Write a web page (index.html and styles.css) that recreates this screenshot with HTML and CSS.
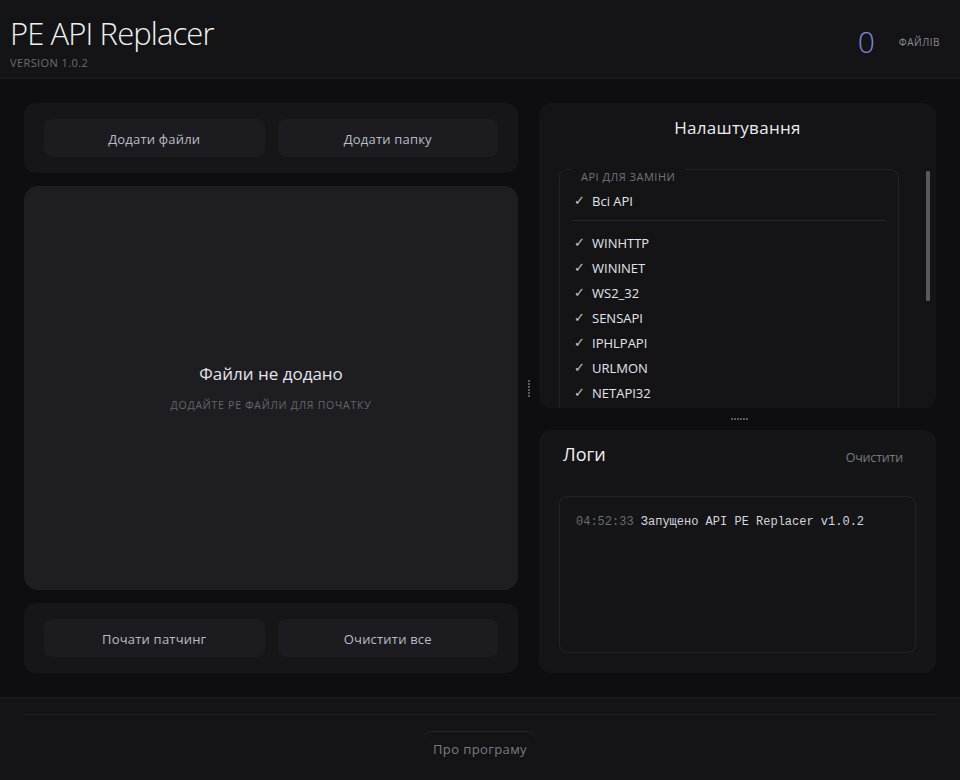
FILE: index.html
```html
<!DOCTYPE html>
<html lang="uk">
<head>
<meta charset="utf-8">
<title>PE API Replacer</title>
<link rel="stylesheet" href="styles.css">
</head>
<body>
<div class="app">
  <header class="header">
    <div class="brand">
      <h1 class="title">PE API Replacer</h1>
      <div class="version">VERSION 1.0.2</div>
    </div>
    <div class="counter">
      <span class="count">0</span>
      <span class="count-label">ФАЙЛІВ</span>
    </div>
  </header>

  <main class="main">
    <section class="left">
      <div class="card btn-row">
        <button class="btn">Додати файли</button>
        <button class="btn">Додати папку</button>
      </div>
      <div class="dropzone">
        <div class="dz-title">Файли не додано</div>
        <div class="dz-sub">Додайте PE файли для початку</div>
      </div>
      <div class="card btn-row">
        <button class="btn">Почати патчинг</button>
        <button class="btn">Очистити все</button>
      </div>
    </section>

    <div class="vsplit"><span class="vdots"></span></div>

    <section class="right">
      <div class="settings">
        <h2 class="settings-title">Налаштування</h2>
        <div class="scroll">
          <fieldset class="apis">
            <legend class="legend">API для заміни</legend>
            <div class="item"><span class="chk">✓</span>Всі API</div>
            <div class="divider"></div>
            <div class="item"><span class="chk">✓</span>WINHTTP</div>
            <div class="item"><span class="chk">✓</span>WININET</div>
            <div class="item"><span class="chk">✓</span>WS2_32</div>
            <div class="item"><span class="chk">✓</span>SENSAPI</div>
            <div class="item"><span class="chk">✓</span>IPHLPAPI</div>
            <div class="item"><span class="chk">✓</span>URLMON</div>
            <div class="item"><span class="chk">✓</span>NETAPI32</div>
          </fieldset>
        </div>
        <div class="thumb"></div>
      </div>
      <div class="hsplit"><span class="hdots"></span></div>
      <div class="logs">
        <div class="logs-head">
          <h2 class="logs-title">Логи</h2>
          <button class="link-btn">Очистити</button>
        </div>
        <div class="logbox">
          <div class="logline"><span class="time">04:52:33</span> Запущено API PE Replacer v1.0.2</div>
        </div>
      </div>
    </section>
  </main>

  <footer class="footer">
    <div class="footer-inner">
      <button class="about">Про програму</button>
    </div>
  </footer>
</div>
</body>
</html>
```
FILE: styles.css
```css
* { box-sizing: border-box; }
html, body { margin: 0; padding: 0; }
body {
  background: #0e0e10;
  color: #ddd;
  font-family: "Open Sans", "Noto Sans", "DejaVu Sans", sans-serif;
  width: 960px;
  height: 780px;
  overflow: hidden;
}
button { font-family: inherit; cursor: pointer; }
.app { display: flex; flex-direction: column; height: 780px; }

.header {
  height: 79px;
  background: #141416;
  border-bottom: 1px solid #1f1f22;
  display: flex;
  justify-content: space-between;
  align-items: flex-start;
  padding: 0 20px 0 10px;
}
.title {
  margin: 13px 0 0;
  font-size: 31px;
  font-weight: 300;
  color: #f0f0f0;
  line-height: 40px;
  letter-spacing: -0.9px;
}
.version {
  margin-top: 2px;
  font-size: 11px;
  color: #6c6c74;
  letter-spacing: 0.4px;
}
.counter {
  display: flex;
  align-items: center;
  gap: 24px;
  margin-top: 22px;
}
.count {
  font-size: 30px;
  font-weight: 300;
  color: #7f84d6;
  line-height: 40px;
}
.count-label {
  font-size: 10px;
  color: #8a8a94;
  letter-spacing: 0.5px;
}

.main {
  flex: 1;
  display: grid;
  grid-template-columns: 494px 21px 397px;
  padding: 24px 24px 24px 24px;
}
.left {
  display: flex;
  flex-direction: column;
  gap: 13px;
}
.card {
  background: #161618;
  border-radius: 12px;
}
.btn-row {
  height: 70px;
  display: grid;
  grid-template-columns: 1fr 1fr;
  gap: 13px;
  padding: 16px 20px;
}
.btn {
  background: #1c1c20;
  border: none;
  border-radius: 8px;
  color: #b9bcc6;
  font-size: 13px;
  letter-spacing: 0.2px;
  height: 38px;
  padding-top: 2px;
}
.dropzone {
  flex: 1;
  background: #1e1e22;
  border-radius: 14px;
  display: flex;
  flex-direction: column;
  align-items: center;
  justify-content: center;
  padding-bottom: 2px;
}
.dz-title {
  font-size: 17px;
  color: #e4e4e8;
}
.dz-sub {
  margin-top: 13px;
  font-size: 10.5px;
  color: #65656d;
  text-transform: uppercase;
  letter-spacing: 0.75px;
}

.vsplit {
  display: flex;
  align-items: center;
  justify-content: center;
}
.vdots {
  width: 2px;
  height: 17px;
  margin-left: 1px;
  background: repeating-linear-gradient(to bottom, #5a5a60 0 2px, transparent 2px 3px);
}

.right {
  display: flex;
  flex-direction: column;
}
.settings {
  position: relative;
  height: 305px;
  background: #141416;
  border-radius: 12px;
  overflow: hidden;
  padding: 0 37px 0 20px;
}
.settings-title {
  margin: 13px 0 0;
  font-size: 17px;
  font-weight: 400;
  color: #ececf0;
  text-align: center;
  padding-left: 17px;
  letter-spacing: 0.3px;
  line-height: 24px;
}
.scroll { margin-top: 14px; }
.apis {
  margin: 0;
  border: 1px solid #222226;
  border-radius: 8px;
  padding: 0 12px 40px 12px;
  min-width: 0;
}
.legend {
  font-size: 11px;
  color: #73737b;
  text-transform: uppercase;
  letter-spacing: 0.5px;
  padding: 16px 10px 0 9px;
  margin-left: 0;
  line-height: 14px;
}
.item {
  display: flex;
  align-items: center;
  height: 25px;
  font-size: 13px;
  color: #e2e4ec;
}
.item:first-of-type { margin-top: 4px; }
.chk {
  width: 20px;
  padding-left: 2px;
  font-size: 13px;
  font-weight: bold;
  color: #c4c4cc;
  font-family: "DejaVu Sans", sans-serif;
}
.divider {
  height: 1px;
  background: #26262a;
  margin: 7px 0 9px;
}
.thumb {
  position: absolute;
  right: 6px;
  top: 68px;
  width: 4px;
  height: 130px;
  background: #58585f;
  border-radius: 1px;
}

.hsplit {
  height: 22px;
  display: flex;
  align-items: center;
  justify-content: center;
}
.hdots {
  width: 17px;
  height: 2px;
  margin-left: 4px;
  background: repeating-linear-gradient(to right, #5a5a60 0 2px, transparent 2px 3px);
}

.logs {
  flex: 1;
  background: #151517;
  border-radius: 12px;
  padding: 0 20px 20px;
  display: flex;
  flex-direction: column;
}
.logs-head {
  display: flex;
  justify-content: space-between;
  align-items: flex-start;
  height: 66px;
  padding: 11px 13px 0 4px;
}
.logs-title {
  margin: 0;
  font-size: 18px;
  font-weight: 400;
  color: #f0f0f2;
  line-height: 26px;
}
.link-btn {
  background: none;
  border: none;
  padding: 0;
  margin-top: 8px;
  font-size: 12.5px;
  color: #7a7a82;
  letter-spacing: -0.2px;
}
.logbox {
  flex: 1;
  border: 1px solid #222226;
  border-radius: 8px;
  padding: 18px 16px;
}
.logline {
  font-family: "Liberation Mono", "DejaVu Sans Mono", monospace;
  font-size: 12px;
  color: #d4d6de;
}
.time { color: #6a6a74; }

.footer {
  height: 83px;
  background: #141416;
  border-top: 1px solid #1f1f22;
  padding: 16px 24px 0;
}
.footer-inner {
  border-top: 1px solid #1f1f22;
  display: flex;
  justify-content: center;
  padding-top: 16px;
}
.about {
  width: 112px;
  height: 34px;
  background: none;
  border: none;
  border-top: 1px solid #26262a;
  border-radius: 8px;
  color: #7a7a84;
  font-size: 13px;
  letter-spacing: 0.4px;
}
```
